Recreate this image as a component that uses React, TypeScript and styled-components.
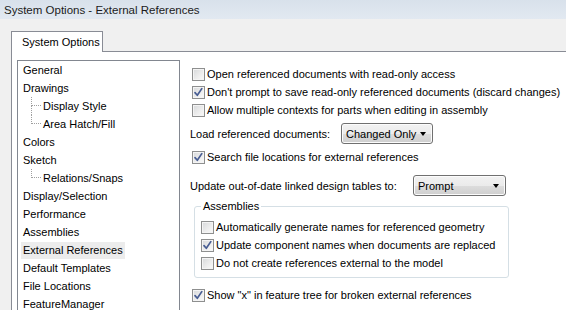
import React from 'react'
import styled, { createGlobalStyle } from 'styled-components'

const GlobalStyle = createGlobalStyle`
  html, body {
    margin: 0;
    padding: 0;
    background: #f0f0f0;
  }
  body {
    font-family: "Liberation Sans", Arial, sans-serif;
    font-size: 11px;
    color: #000;
  }
`

const Window = styled.div`
  width: 566px;
  height: 310px;
  overflow: hidden;
  display: flex;
  flex-direction: column;
  background: #f0f0f0;
`

const TitleBar = styled.div`
  height: 19px;
  flex: none;
  display: flex;
  align-items: center;
  padding-left: 4px;
  background: linear-gradient(#d8e1eb, #e2e9f1);
  font-size: 11.5px;
  color: #1b1b1b;
`

const Body = styled.div`
  flex: 1;
  display: flex;
  flex-direction: column;
  padding: 12px 0 0 11px;
  min-height: 0;
`

const TabStrip = styled.div`
  display: flex;
  flex: none;
`

const Tab = styled.div`
  width: 92px;
  height: 21px;
  box-sizing: border-box;
  margin-bottom: -1px;
  position: relative;
  z-index: 1;
  display: flex;
  align-items: center;
  padding-left: 10px;
  background: #fff;
  border: 1px solid #898c95;
  border-bottom: none;
  white-space: nowrap;
`

const Panel = styled.div`
  flex: 1;
  display: flex;
  background: #fff;
  border-top: 1px solid #898c95;
  border-left: 1px solid #898c95;
  min-height: 0;
`

const Tree = styled.div`
  width: 163px;
  box-sizing: border-box;
  margin: 8px 0 0 5px;
  border: 1px solid #828790;
  border-bottom: none;
  flex: none;
`

const TreeRow = styled.div<{ $child?: boolean }>`
  height: 18px;
  display: flex;
  align-items: center;
  padding-left: ${(p) => (p.$child ? '13px' : '5px')};
  white-space: nowrap;
`

const Branch = styled.div`
  width: 10px;
  height: 18px;
  display: flex;
  flex-direction: column;
  flex: none;
`

const BranchTop = styled.div`
  height: 9px;
  border-left: 1px dotted #a0a0a0;
  border-bottom: 1px dotted #a0a0a0;
  box-sizing: border-box;
`

const BranchBottom = styled.div<{ $last?: boolean }>`
  flex: 1;
  border-left: 1px dotted ${(p) => (p.$last ? 'transparent' : '#a0a0a0')};
`

const TreeLabel = styled.span<{ $selected?: boolean; $child?: boolean }>`
  display: inline-block;
  line-height: 17px;
  padding: 0 2px;
  margin-left: ${(p) => (p.$child ? '0' : '-2px')};
  background: ${(p) => (p.$selected ? '#ececec' : 'transparent')};
`

const Options = styled.div`
  margin-left: 10px;
  padding-top: 13px;
  display: flex;
  flex-direction: column;
  flex: 1;
`

const Row = styled.div<{ $gap?: number }>`
  height: 18px;
  display: flex;
  align-items: center;
  margin-top: ${(p) => p.$gap ?? 0}px;
  white-space: nowrap;
`

const Box = styled.span`
  width: 13px;
  height: 13px;
  box-sizing: border-box;
  margin: 0 2px 0 2px;
  border: 1px solid #8e8f8f;
  background: linear-gradient(135deg, #d6d8da 0%, #eeeeee 60%, #fafafa 100%);
  box-shadow: inset 0 0 0 1px #f4f4f4;
  display: flex;
  align-items: center;
  justify-content: center;
  flex: none;
`

const SelectRow = styled.div<{ $gap: number }>`
  height: 21px;
  display: flex;
  align-items: center;
  margin-top: ${(p) => p.$gap}px;
  white-space: nowrap;
`

const SelectLabel = styled.span<{ $width: number }>`
  width: ${(p) => p.$width}px;
  flex: none;
`

const Select = styled.div<{ $width: number }>`
  width: ${(p) => p.$width}px;
  height: 21px;
  box-sizing: border-box;
  border: 1px solid #707070;
  border-radius: 3px;
  background: linear-gradient(#f2f2f2 0%, #ebebeb 50%, #dddddd 51%, #cfcfcf 100%);
  box-shadow: inset 0 0 0 1px #fcfcfc;
  display: flex;
  align-items: center;
  justify-content: space-between;
  padding: 0 6px 0 4px;
`

const Arrow = styled.span`
  width: 0;
  height: 0;
  border-left: 3.5px solid transparent;
  border-right: 3.5px solid transparent;
  border-top: 4px solid #000;
`

const Group = styled.fieldset`
  width: 315px;
  box-sizing: border-box;
  margin: 3px 0 0 4px;
  padding: 5px 6px 5px 4px;
  border: 1px solid #d5dfe5;
  border-radius: 3px;
  min-width: 0;
`

const Legend = styled.legend`
  padding: 0 2px;
  margin-left: 2px;
  line-height: 14px;
`

function Check({ checked }: { checked?: boolean }) {
  return (
    <Box>
      {checked && (
        <svg width="11" height="11" viewBox="0 0 11 11">
          <path d="M2 5.6 L4.3 8.3 L8.8 1.6" fill="none" stroke="#485d93" strokeWidth="1.7" strokeLinecap="round" strokeLinejoin="round" />
        </svg>
      )}
    </Box>
  )
}

type TreeNode = { label: string; child?: boolean; last?: boolean; selected?: boolean }

const treeItems: TreeNode[] = [
  { label: 'General' },
  { label: 'Drawings' },
  { label: 'Display Style', child: true },
  { label: 'Area Hatch/Fill', child: true, last: true },
  { label: 'Colors' },
  { label: 'Sketch' },
  { label: 'Relations/Snaps', child: true, last: true },
  { label: 'Display/Selection' },
  { label: 'Performance' },
  { label: 'Assemblies' },
  { label: 'External References', selected: true },
  { label: 'Default Templates' },
  { label: 'File Locations' },
  { label: 'FeatureManager' },
]

export default function App() {
  return (
    <Window>
      <GlobalStyle />
      <TitleBar>System Options - External References</TitleBar>
      <Body>
        <TabStrip>
          <Tab>System Options</Tab>
        </TabStrip>
        <Panel>
          <Tree>
            {treeItems.map((item) => (
              <TreeRow key={item.label} $child={item.child}>
                {item.child && (
                  <Branch>
                    <BranchTop />
                    <BranchBottom $last={item.last} />
                  </Branch>
                )}
                <TreeLabel $selected={item.selected} $child={item.child}>
                  {item.label}
                </TreeLabel>
              </TreeRow>
            ))}
          </Tree>
          <Options>
            <Row>
              <Check />
              Open referenced documents with read-only access
            </Row>
            <Row>
              <Check checked />
              Don't prompt to save read-only referenced documents (discard changes)
            </Row>
            <Row>
              <Check />
              Allow multiple contexts for parts when editing in assembly
            </Row>
            <SelectRow $gap={4}>
              <SelectLabel $width={151}>Load referenced documents:</SelectLabel>
              <Select $width={92}>
                Changed Only
                <Arrow />
              </Select>
            </SelectRow>
            <Row $gap={4}>
              <Check checked />
              Search file locations for external references
            </Row>
            <SelectRow $gap={9}>
              <SelectLabel $width={223}>Update out-of-date linked design tables to:</SelectLabel>
              <Select $width={93}>
                Prompt
                <Arrow />
              </Select>
            </SelectRow>
            <Group>
              <Legend>Assemblies</Legend>
              <Row>
                <Check />
                Automatically generate names for referenced geometry
              </Row>
              <Row>
                <Check checked />
                Update component names when documents are replaced
              </Row>
              <Row>
                <Check />
                Do not create references external to the model
              </Row>
            </Group>
            <Row $gap={8}>
              <Check checked />
              Show "x" in feature tree for broken external references
            </Row>
          </Options>
        </Panel>
      </Body>
    </Window>
  )
}
